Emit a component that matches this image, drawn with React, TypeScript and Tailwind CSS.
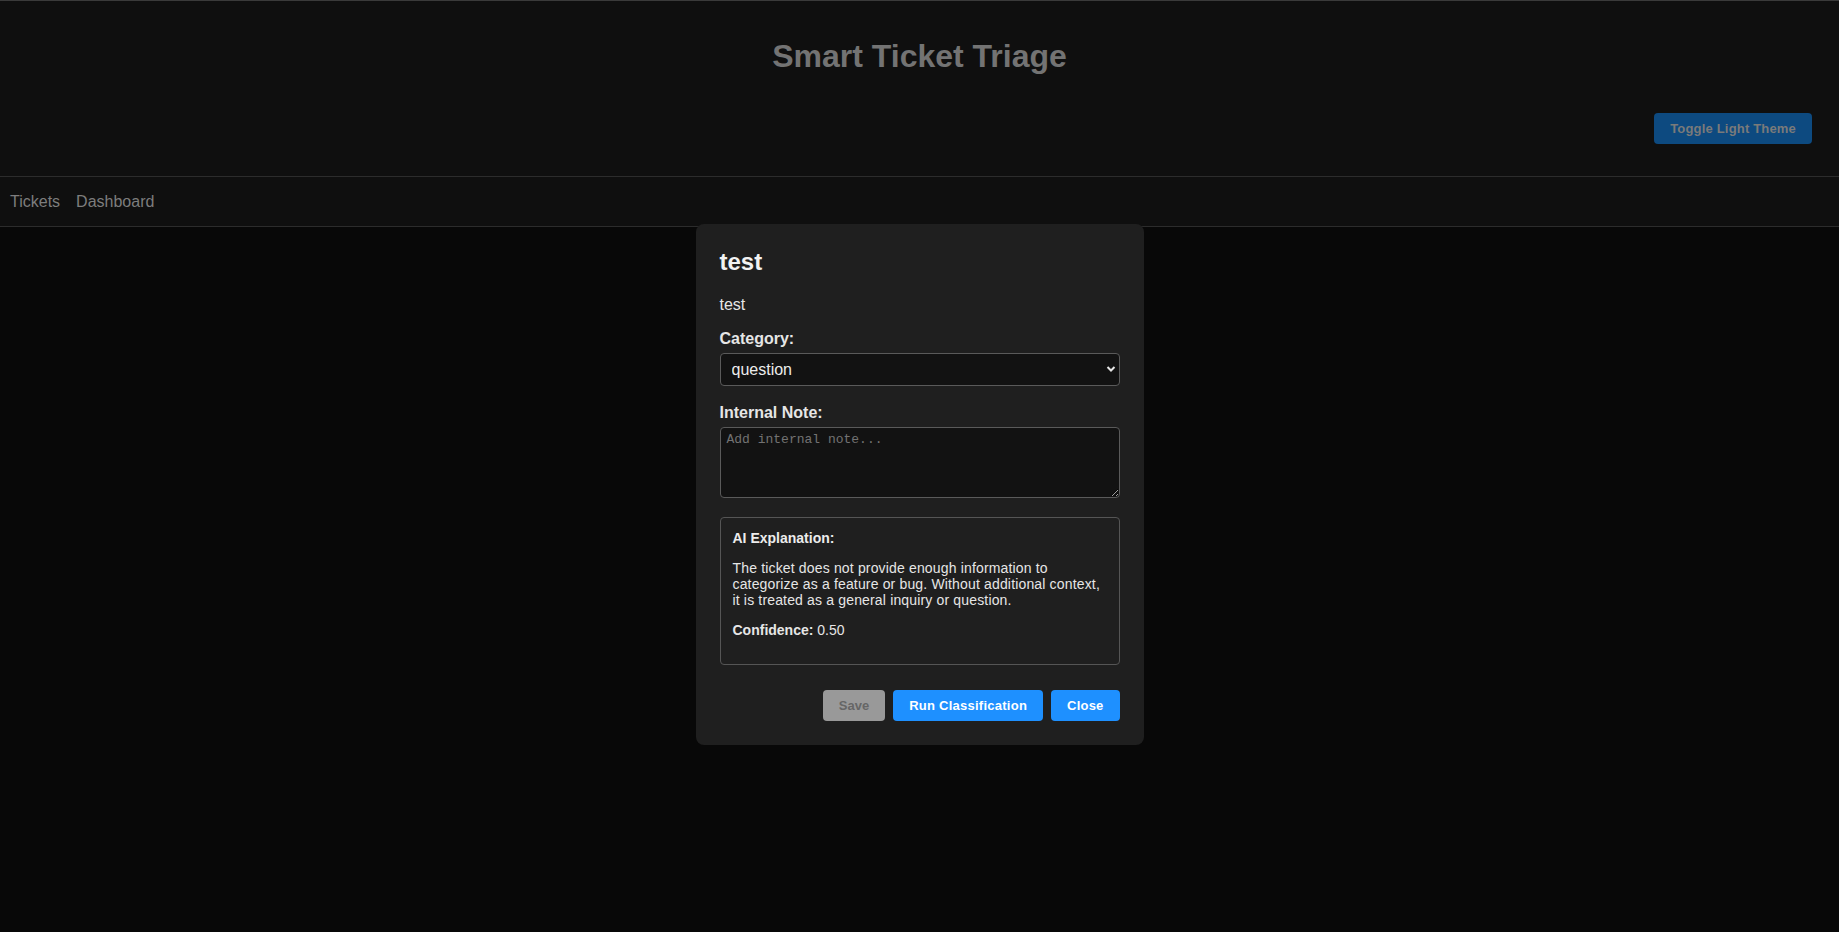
import { useState } from 'react'

export default function App() {
  const [category, setCategory] = useState('question')
  const [note, setNote] = useState('')

  return (
    <div className="relative min-h-screen bg-[#080808] font-['Liberation_Sans',Arial,sans-serif]">
      <header className="border-t border-[#3a3a3a] bg-[#0f0f0f] border-b border-b-[#2c2c2c]">
        <h1 className="pt-[37px] text-center text-[32px] font-bold leading-[37px] text-[#737373]">
          Smart Ticket Triage
        </h1>
        <div className="flex justify-end pr-[27px] pt-[38px] pb-[32px]">
          <button className="rounded bg-[#0d4a80] px-4 py-2 text-[13px] font-bold leading-[15px] tracking-[0.18px] text-[#7a7a7a]">
            Toggle Light Theme
          </button>
        </div>
      </header>

      <nav className="flex h-[50px] items-center gap-[16px] border-b border-[#2c2c2c] bg-[#0f0f0f] px-[10px] text-[16px] text-[#7d7d7d]">
        <a>Tickets</a>
        <a>Dashboard</a>
      </nav>

      {/* modal */}
      <div className="absolute left-1/2 top-[224px] w-[448px] -translate-x-1/2 rounded-lg bg-[#1f1f1f] p-6 text-[#e6e6e6]">
        <h2 className="text-[24px] font-bold leading-[28px] text-[#f2f2f2]">test</h2>
        <p className="mt-[20px] text-[16px] leading-[18px]">test</p>

        <label className="mt-4 block text-[16px] font-bold leading-[18px]">Category:</label>
        <div className="relative mt-[5px]">
          <select
            value={category}
            onChange={e => setCategory(e.target.value)}
            className="h-[33px] w-full appearance-none rounded border border-[#5a5a5a] bg-[#121212] pl-[11px] text-[16px] text-[#ececec] outline-none"
          >
            <option value="bug">bug</option>
            <option value="feature">feature</option>
            <option value="question">question</option>
          </select>
          <svg className="pointer-events-none absolute right-[4px] top-[12px]" width="10" height="8" viewBox="0 0 10 8">
            <path d="M1.5 2 L5 5.5 L8.5 2" stroke="#e6e6e6" strokeWidth="2" fill="none" />
          </svg>
        </div>

        <label className="mt-[18px] block text-[16px] font-bold leading-[18px]">Internal Note:</label>
        <textarea
          value={note}
          onChange={e => setNote(e.target.value)}
          placeholder="Add internal note..."
          className="mt-[5px] block h-[71px] w-full rounded border border-[#5a5a5a] bg-[#121212] px-[6px] pt-[4px] font-['Liberation_Mono',monospace] text-[13px] leading-[15px] text-[#e6e6e6] outline-none placeholder:text-[#727272]"
        />

        <div className="mt-[19px] rounded border border-[#555] px-3 pt-3 text-[14px] leading-[16px]">
          <strong className="block text-[#ececec]">AI Explanation:</strong>
          <p className="mt-[14px] tracking-[0.16px]">
            The ticket does not provide enough information to categorize as a feature or bug. Without additional context,
            it is treated as a general inquiry or question.
          </p>
          <p className="mt-[14px] pb-[26px]">
            <strong>Confidence:</strong> 0.50
          </p>
        </div>

        <div className="mt-[25px] flex justify-end gap-2">
          <button disabled className="rounded bg-[#999] px-4 py-2 text-[13px] font-bold leading-[15px] text-[#666]">
            Save
          </button>
          <button className="rounded bg-[#1e90ff] px-4 py-2 text-[13px] font-bold leading-[15px] tracking-[0.25px] text-white">
            Run Classification
          </button>
          <button className="rounded bg-[#1e90ff] px-4 py-2 text-[13px] font-bold leading-[15px] tracking-[0.2px] text-white">
            Close
          </button>
        </div>
      </div>
    </div>
  )
}
